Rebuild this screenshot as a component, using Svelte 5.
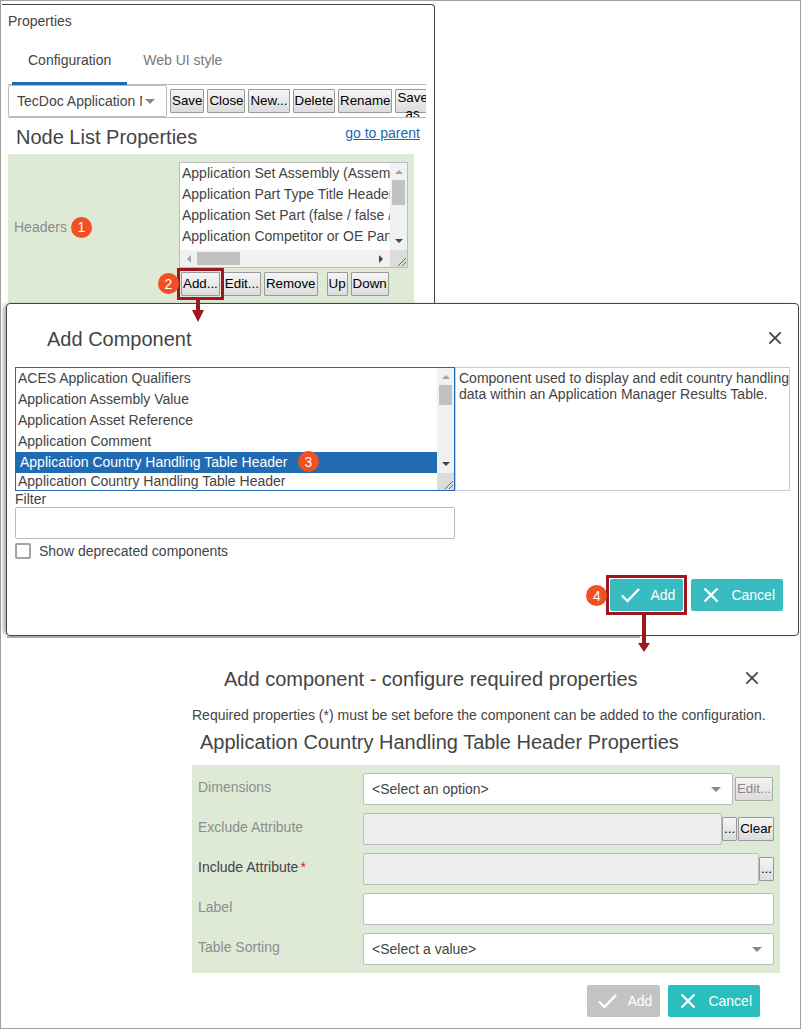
<script>
  const headers = [
    'Application Set Assembly (Assembly)',
    'Application Part Type Title Header',
    'Application Set Part (false / false / false)',
    'Application Competitor or OE Part'
  ];
  const components = [
    'ACES Application Qualifiers',
    'Application Assembly Value',
    'Application Asset Reference',
    'Application Comment',
    'Application Country Handling Table Header',
    'Application Country Handling Table Header'
  ];
  const toolbar = ['Save', 'Close', 'New...', 'Delete', 'Rename'];
  let chosen = $state(4);
  let filter = $state('');
  let label = $state('');
</script>

{#snippet tick()}
  <svg class="icon" viewBox="0 0 16 16" aria-hidden="true"><path d="M0 8.5 5.5 14 17 2" /></svg>
{/snippet}
{#snippet cross()}
  <svg class="icon" viewBox="0 0 16 16" aria-hidden="true"><path d="M1.5 1.5 14.5 14.5M14.5 1.5 1.5 14.5" /></svg>
{/snippet}
{#snippet caret()}
  <svg class="caret" viewBox="0 0 10 5" aria-hidden="true"><path d="M0 0H10L5 5Z" /></svg>
{/snippet}
{#snippet vbar()}
  <div class="vbar" aria-hidden="true">
    <svg viewBox="0 0 8 4"><path d="M0 4H8L4 0Z" fill="#a3a3a3" /></svg>
    <i></i>
    <svg viewBox="0 0 8 4"><path d="M0 0H8L4 4Z" fill="#444" /></svg>
  </div>
{/snippet}
{#snippet grip()}
  <svg class="grip" viewBox="0 0 17 17" aria-hidden="true"><path d="M8 16 16 8M12 16 16 12" /></svg>
{/snippet}

<main>
  <section class="panel">
    <h1>Properties</h1>
    <nav>
      <button class="tab active">Configuration</button>
      <button class="tab">Web UI style</button>
    </nav>
    <div class="toolbar">
      <div class="select config">
        <select aria-label="Configuration">
          <option>TecDoc Application Node List</option>
        </select>
        {@render caret()}
      </div>
      {#each toolbar as name}
        <button class="btn">{name}</button>
      {/each}
      <button class="btn wrap">Save as</button>
    </div>
    <div class="heading">
      <h2>Node List Properties</h2>
      <a href="#parent">go to parent</a>
    </div>
    <div class="node">
      <div class="node-label">
        <label for="headers">Headers</label>
        <span class="badge">1</span>
      </div>
      <div>
        <div class="listbox headers">
          <select id="headers" size="4">
            {#each headers as h}
              <option>{h}</option>
            {/each}
          </select>
          {@render vbar()}
          <div class="hbar" aria-hidden="true">
            <svg viewBox="0 0 4 8"><path d="M4 0V8L0 4Z" fill="#a3a3a3" /></svg>
            <i></i>
            <svg viewBox="0 0 4 8"><path d="M0 0V8L4 4Z" fill="#444" /></svg>
          </div>
          {@render grip()}
        </div>
        <div class="actions">
          <span class="marked first">
            <button class="btn">Add...</button>
            <span class="frame"></span>
            <span class="badge over">2</span>
            <svg class="arrow" width="12" height="22" viewBox="0 0 12 22" aria-hidden="true"><path d="M4 0H8V10H12L6 22L0 10H4Z" /></svg>
          </span>
          <button class="btn">Edit...</button>
          <button class="btn">Remove</button>
          <button class="btn up">Up</button>
          <button class="btn">Down</button>
        </div>
      </div>
    </div>
  </section>

  <section class="dialog">
    <header>
      <h2>Add Component</h2>
      <button class="close" aria-label="Close">{@render cross()}</button>
    </header>
    <div class="chooser">
      <div class="listbox components">
        <select size="6" aria-label="Components" bind:value={chosen}>
          {#each components as c, i}
            <option value={i}>{c}</option>
          {/each}
        </select>
        {@render vbar()}
        {@render grip()}
        <span class="badge over">3</span>
      </div>
      <p>Component used to display and edit country handling data within an Application Manager Results Table.</p>
    </div>
    <div class="filter">
      <label for="filter">Filter</label>
      <input id="filter" type="text" bind:value={filter} />
    </div>
    <label class="check"><input type="checkbox" /> Show deprecated components</label>
    <footer>
      <span class="marked second">
        <button class="cta">{@render tick()}Add</button>
        <span class="frame"></span>
        <span class="badge over">4</span>
        <svg class="arrow" width="12" height="37" viewBox="0 0 12 37" aria-hidden="true"><path d="M4 0H8V28H12L6 37L0 28H4Z" /></svg>
      </span>
      <button class="cta">{@render cross()}Cancel</button>
    </footer>
  </section>

  <section class="required">
    <header>
      <h2>Add component - configure required properties</h2>
      <button class="close" aria-label="Close">{@render cross()}</button>
    </header>
    <p>Required properties (*) must be set before the component can be added to the configuration.</p>
    <h3>Application Country Handling Table Header Properties</h3>
    <div class="form">
      <div class="row">
        <label for="dimensions">Dimensions</label>
        <div class="select">
          <select id="dimensions"><option>&lt;Select an option&gt;</option></select>
          {@render caret()}
        </div>
        <button class="btn apart" disabled>Edit...</button>
      </div>
      <div class="row">
        <label for="exclude">Exclude Attribute</label>
        <input id="exclude" type="text" readonly />
        <button class="btn" aria-label="Browse">...</button>
        <button class="btn clear">Clear</button>
      </div>
      <div class="row">
        <label for="include" class="needed">Include Attribute<b>*</b></label>
        <input id="include" type="text" readonly />
        <button class="btn" aria-label="Browse">...</button>
      </div>
      <div class="row">
        <label for="label">Label</label>
        <input id="label" type="text" bind:value={label} />
      </div>
      <div class="row">
        <label for="sorting">Table Sorting</label>
        <div class="select">
          <select id="sorting"><option>&lt;Select a value&gt;</option></select>
          {@render caret()}
        </div>
      </div>
    </div>
    <footer>
      <button class="cta" disabled>{@render tick()}Add</button>
      <button class="cta">{@render cross()}Cancel</button>
    </footer>
  </section>
</main>

<style>
  :global(body) {
    background: #fff;
  }
  main,
  main :global(*) {
    box-sizing: border-box;
  }
  main {
    border: 1px solid #a0a0a0;
    padding: 3px 1px 11px;
    font-family: 'Liberation Sans', Arial, sans-serif;
    font-size: 14px;
    line-height: 16px;
    color: #444;
    overflow: hidden;
  }
  h1,
  h2,
  h3,
  p {
    margin: 0;
    font-weight: 400;
  }
  h1 {
    font-size: 14px;
  }
  h2,
  h3 {
    font-size: 20px;
    line-height: 24px;
  }
  button,
  input,
  select {
    font-family: inherit;
    margin: 0;
  }
  button {
    cursor: pointer;
  }

  .panel {
    max-width: 433px;
    border: 1px solid #444;
    border-width: 1px 1px 0 0;
    border-radius: 0 4px 0 0;
    padding: 8px 8px 0 6px;
  }
  nav {
    display: flex;
    padding: 11px 4px 0;
  }
  .tab {
    height: 45px;
    padding: 0 16px 2px;
    border: 0;
    border-bottom: 3px solid transparent;
    background: none;
    font-size: 14px;
    color: #777;
  }
  .tab.active {
    border-color: #216bb3;
    color: #444;
  }
  .toolbar {
    display: flex;
    align-items: center;
    gap: 3px;
    height: 34px;
    margin-top: -1px;
    border: 1px solid #bbb;
    border-width: 1px 0;
    overflow: hidden;
  }
  .btn {
    flex: none;
    height: 24px;
    padding: 0 1px 1px;
    border: 1px solid #999;
    border-radius: 1px;
    background: linear-gradient(#f5f5f5, #dcdcdc);
    color: #000;
    white-space: nowrap;
  }
  .btn:disabled {
    color: #888;
    border-color: #aaa;
  }
  .btn.wrap {
    display: flex;
    align-items: flex-start;
    width: 34px;
    line-height: 16px;
    white-space: normal;
  }
  .select {
    position: relative;
    flex: 1;
    min-width: 0;
  }
  .select select {
    display: block;
    appearance: none;
    width: 100%;
    height: 32px;
    padding: 0 24px 0 8px;
    border: 1px solid #bbb;
    border-radius: 2px;
    background: #fff;
    font-size: 14px;
    color: #444;
  }
  .caret {
    position: absolute;
    top: 14px;
    right: 12px;
    width: 10px;
    height: 5px;
    fill: #888;
    pointer-events: none;
  }
  .select.config {
    flex: 0 0 159px;
  }
  .heading {
    display: flex;
    justify-content: space-between;
    padding: 7px 6px 5px 8px;
  }
  .heading a {
    color: #216bb3;
  }
  .node {
    display: grid;
    grid-template-columns: 1fr 229px;
    align-items: center;
    margin-right: 12px;
    padding: 8px 6px 7px;
    background: #deead6;
    color: #8c8c8c;
  }
  .node-label {
    display: flex;
    align-items: center;
    gap: 4px;
    padding-bottom: 4px;
  }
  .badge {
    display: grid;
    place-items: center;
    width: 21px;
    height: 21px;
    border-radius: 50%;
    background: #f15022;
    color: #fff;
  }
  .badge.over {
    position: absolute;
  }

  .listbox {
    position: relative;
    display: grid;
    grid-template-columns: 1fr 17px;
    border: 1px solid #bbb;
    background: #fff;
  }
  .headers {
    grid-template-rows: 87px 17px;
  }
  .listbox select {
    min-width: 0;
    width: 100%;
    height: 100%;
    padding: 0;
    border: 0;
    outline: 0;
    background: #fff;
    font-size: 14px;
    line-height: 16px;
    color: #444;
    overflow: hidden;
    scrollbar-width: none;
  }
  .listbox option {
    padding: 2px 2px 3px;
    line-height: 16px;
    min-height: 0;
  }
  .listbox option:checked {
    padding-left: 4px;
    background: linear-gradient(#216bb3, #216bb3);
    -webkit-text-fill-color: #fff;
  }
  .listbox option:checked + option {
    padding-top: 0;
  }
  .vbar,
  .hbar {
    display: flex;
    align-items: center;
    background: #f1f1f1;
  }
  .vbar {
    flex-direction: column;
    padding: 7px 0;
  }
  .hbar {
    padding: 0 7px;
  }
  .vbar svg {
    width: 8px;
    height: 4px;
  }
  .hbar svg {
    width: 4px;
    height: 8px;
  }
  .vbar i {
    width: 13px;
    height: 25px;
    margin: 6px 0 auto;
    background: #c1c1c1;
  }
  .components .vbar i {
    height: 20px;
  }
  .hbar i {
    width: 43px;
    height: 13px;
    margin: 0 auto 0 6px;
    background: #c1c1c1;
  }
  .grip {
    width: 17px;
    height: 17px;
    background: #dcdcdc;
    fill: none;
    stroke: #666;
  }
  .actions {
    display: flex;
    gap: 3px;
    margin: 4px 0 0 2px;
  }
  .up {
    margin-left: 6px;
  }

  .marked {
    position: relative;
    display: flex;
  }
  .frame {
    position: absolute;
    inset: -4px;
    border: 3px solid #9e1620;
    pointer-events: none;
  }
  .arrow {
    position: absolute;
    z-index: 2;
    top: calc(100% + 4px);
    left: calc(50% - 6px);
    fill: #9e1620;
  }
  .first {
    z-index: 2;
  }
  .first .arrow {
    left: 11px;
  }
  .first .badge {
    top: 1px;
    right: calc(100% + 2px);
  }
  .second .badge {
    top: 6px;
    right: calc(100% + 3px);
  }
  .second .arrow {
    left: calc(50% - 9px);
  }

  .dialog {
    position: relative;
    margin-left: 4px;
    padding: 23px 8px 24px;
    border: 1px solid #444;
    border-radius: 4px;
    background: #fff;
    box-shadow: -4px 0 4px -2px rgba(0, 0, 0, 0.4);
  }
  .dialog::after {
    content: '';
    position: absolute;
    z-index: 1;
    top: calc(100% + 1px);
    left: 0;
    width: 80%;
    height: 2px;
    background: #a9a9a9;
  }
  header {
    display: flex;
    align-items: center;
    justify-content: space-between;
    padding: 0 8px 0 32px;
  }
  .close {
    width: 14px;
    height: 14px;
    margin-bottom: 2px;
    padding: 0;
    border: 0;
    background: none;
    color: #444;
  }
  .icon {
    display: block;
    width: 16px;
    height: 16px;
    fill: none;
    stroke: currentColor;
    stroke-width: 2.4;
    overflow: visible;
  }
  .close .icon {
    width: 14px;
    height: 14px;
    stroke-width: 2;
  }
  .chooser {
    display: grid;
    grid-template-columns: 440fr 335fr;
    margin-top: 16px;
  }
  .components {
    grid-template-rows: 105px 17px;
    border-color: #216bb3;
  }
  .components select {
    grid-row: 1 / 3;
  }
  .components .badge {
    top: 83px;
    left: 282px;
  }
  .chooser p {
    padding: 2px 0 0 3px;
    border: 1px solid #ccc;
  }
  input[type='text'] {
    display: block;
    flex: 1;
    min-width: 0;
    height: 32px;
    padding: 0 8px;
    border: 1px solid #bbb;
    border-radius: 2px;
    background: #fff;
    font-size: 14px;
  }
  input[type='text'][readonly] {
    background: #ededed;
  }
  .filter {
    width: calc(100% * 440 / 775);
  }
  .filter input[type='text'] {
    width: 100%;
  }
  .check {
    display: flex;
    gap: 8px;
    margin-top: 4px;
  }
  .check input {
    appearance: none;
    width: 16px;
    height: 16px;
    border: 2px solid #a3a3a3;
    border-radius: 2px;
    background: #fff;
  }
  .check input:checked {
    background: #216bb3;
  }
  footer {
    display: flex;
    justify-content: flex-end;
    gap: 8px;
  }
  .dialog footer {
    margin-top: 20px;
    padding-right: 7px;
  }
  .cta {
    display: flex;
    align-items: center;
    gap: 12px;
    height: 32px;
    padding: 0 8px 0 12px;
    border: 0;
    border-radius: 2px;
    background: #2abfbf;
    color: #fff;
    font-size: 14px;
  }
  .dialog .cta {
    background: #38bcc0;
  }
  .cta:disabled {
    background: #c3c3c3;
  }

  .required {
    position: relative;
    max-width: 588px;
    margin: 31px 19px 0 auto;
  }
  .required header {
    padding-right: 21px;
  }
  .required p {
    margin-top: 16px;
  }
  .required h3 {
    margin: 7px 0 11px 8px;
  }
  .form {
    display: grid;
    gap: 8px;
    padding: 8px 6px;
    background: #deead6;
  }
  .row {
    display: flex;
    align-items: center;
  }
  .row label {
    align-self: flex-start;
    flex: 0 0 165px;
    padding-top: 6px;
    color: #8c8c8c;
  }
  .row .needed {
    color: #444;
  }
  .needed b {
    margin-left: 2px;
    font-weight: 400;
    color: #e02020;
  }
  .apart {
    margin: 0 1px 0 2px;
  }
  .clear {
    margin-left: 1px;
  }
  .required footer {
    margin-top: 12px;
    padding-right: 20px;
  }
</style>
